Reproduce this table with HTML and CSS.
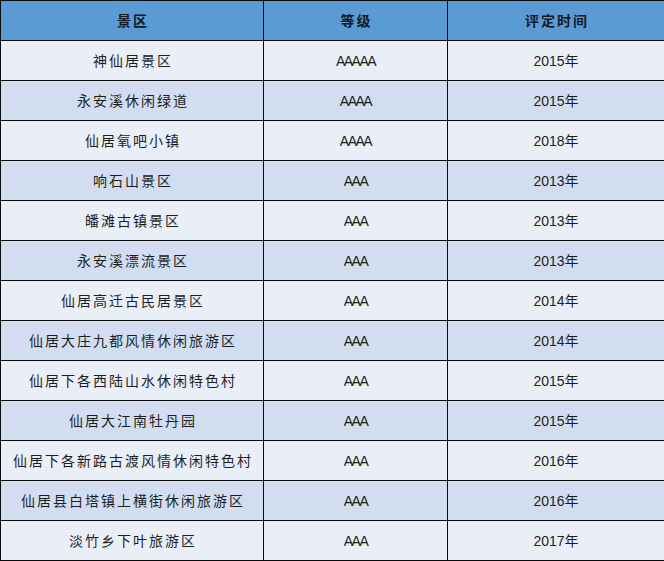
FILE: index.html
```html
<!DOCTYPE html>
<html lang="zh">
<head>
<meta charset="utf-8">
<link rel="stylesheet" href="styles.css">
</head>
<body>
<table class="grid">
  <colgroup>
    <col class="c1"><col class="c2"><col class="c3">
  </colgroup>
  <thead>
    <tr><th class="cjk">景区</th><th class="cjk">等级</th><th class="cjk">评定时间</th></tr>
  </thead>
  <tbody>
    <tr><td class="cjk">神仙居景区</td><td class="lvl">AAAAA</td><td>2015年</td></tr>
    <tr><td class="cjk">永安溪休闲绿道</td><td class="lvl">AAAA</td><td>2015年</td></tr>
    <tr><td class="cjk">仙居氧吧小镇</td><td class="lvl">AAAA</td><td>2018年</td></tr>
    <tr><td class="cjk">响石山景区</td><td class="lvl">AAA</td><td>2013年</td></tr>
    <tr><td class="cjk">皤滩古镇景区</td><td class="lvl">AAA</td><td>2013年</td></tr>
    <tr><td class="cjk">永安溪漂流景区</td><td class="lvl">AAA</td><td>2013年</td></tr>
    <tr><td class="cjk">仙居高迁古民居景区</td><td class="lvl">AAA</td><td>2014年</td></tr>
    <tr><td class="cjk">仙居大庄九都风情休闲旅游区</td><td class="lvl">AAA</td><td>2014年</td></tr>
    <tr><td class="cjk">仙居下各西陆山水休闲特色村</td><td class="lvl">AAA</td><td>2015年</td></tr>
    <tr><td class="cjk">仙居大江南牡丹园</td><td class="lvl">AAA</td><td>2015年</td></tr>
    <tr><td class="cjk">仙居下各新路古渡风情休闲特色村</td><td class="lvl">AAA</td><td>2016年</td></tr>
    <tr><td class="cjk">仙居县白塔镇上横街休闲旅游区</td><td class="lvl">AAA</td><td>2016年</td></tr>
    <tr><td class="cjk">淡竹乡下叶旅游区</td><td class="lvl">AAA</td><td>2017年</td></tr>
  </tbody>
</table>
</body>
</html>
```
FILE: styles.css
```css
html, body {
  margin: 0;
  padding: 0;
  background: #ffffff;
}
.grid {
  border-collapse: collapse;
  table-layout: fixed;
  width: 664px;
  font-family: "Liberation Sans", "Noto Sans CJK SC", sans-serif;
  font-size: 14px;
  color: #1e1e1e;
}
.c1 { width: 263px; }
.c2 { width: 184px; }
.c3 { width: 217px; }
.grid th, .grid td {
  border: 1px solid #0a0a0a;
  height: 39px;
  padding: 0;
  text-align: center;
  vertical-align: middle;
  line-height: 20px;
}
.grid th {
  background: #5b9bd5;
  font-weight: bold;
  color: #141a24;
}
.grid tbody tr:nth-child(odd) td { background: #e9eef7; }
.grid tbody tr:nth-child(even) td { background: #d2deef; }
.cjk { letter-spacing: 2px; text-indent: 2px; }
.lvl { letter-spacing: -1.5px; }
```
